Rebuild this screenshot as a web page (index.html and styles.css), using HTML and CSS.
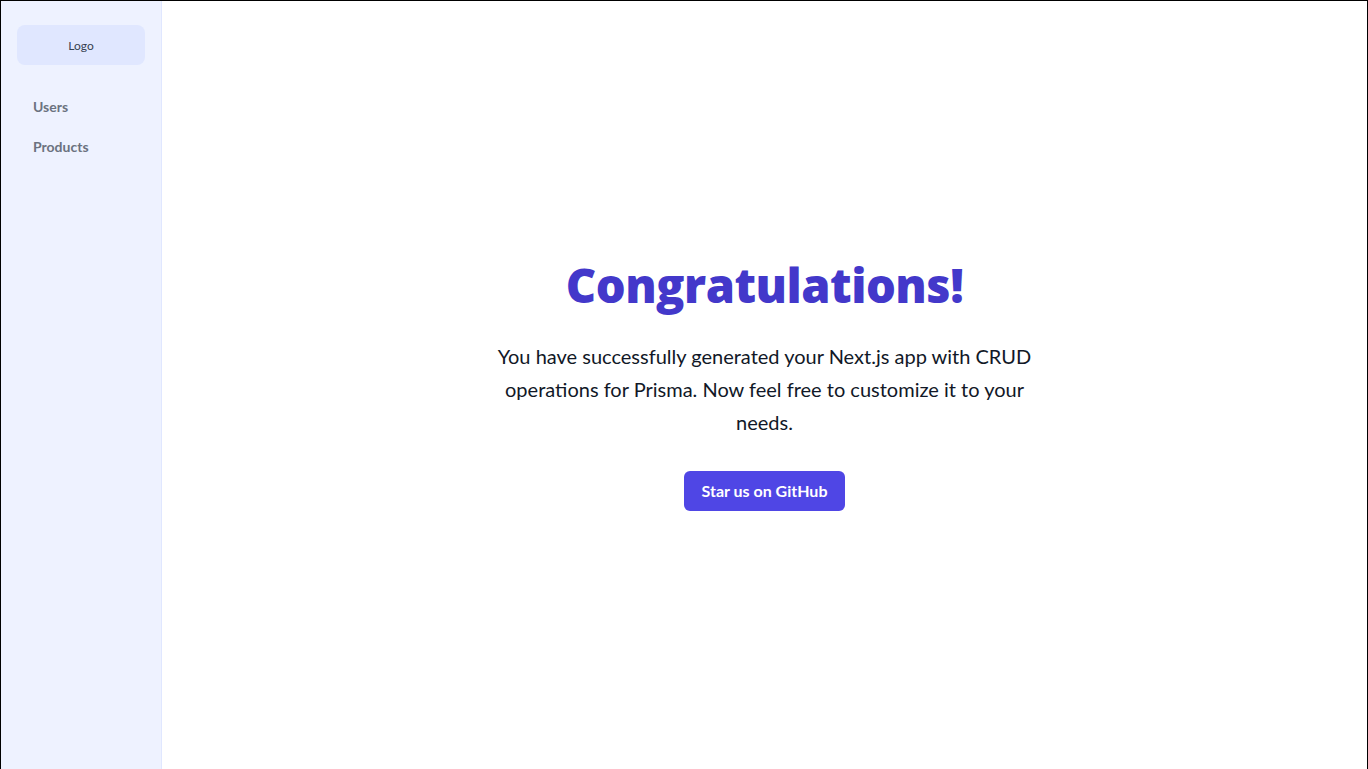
FILE: index.html
```html
<!DOCTYPE html>
<html lang="en">
<head>
<meta charset="utf-8">
<title>App</title>
<link rel="stylesheet" href="styles.css">
</head>
<body>
<div class="frame">
  <aside class="sidebar">
    <div class="logo">Logo</div>
    <nav class="nav">
      <a class="nav-item" href="#">Users</a>
      <a class="nav-item" href="#">Products</a>
    </nav>
  </aside>
  <main class="main">
    <div class="hero">
      <h1 class="title">Congratulations!</h1>
      <p class="lead">You have successfully generated your Next.js app with CRUD operations for Prisma. Now feel free to customize it to your needs.</p>
      <a class="btn" href="#">Star us on GitHub</a>
    </div>
  </main>
</div>
</body>
</html>
```

FILE: styles.css
```css
* { box-sizing: border-box; }
html, body { margin: 0; padding: 0; height: 100%; }
body {
  font-family: "Lato", "Noto Sans", sans-serif;
  background: #fff;
}
.frame {
  display: flex;
  height: 769px;
  border: 1px solid #000;
  border-bottom: none;
}
.sidebar {
  width: 161px;
  flex-shrink: 0;
  background: #eef2ff;
  border-right: 1px solid #e0e7ff;
  padding: 24px 16px;
}
.logo {
  height: 40px;
  background: #e0e7ff;
  border-radius: 8px;
  display: flex;
  align-items: center;
  justify-content: center;
  font-size: 12px;
  color: #374151;
}
.nav {
  display: flex;
  flex-direction: column;
  gap: 20px;
  margin-top: 32px;
  padding-left: 16px;
}
.nav-item {
  font-size: 14px;
  font-weight: 700;
  color: #6b7280;
  text-decoration: none;
  line-height: 20px;
}
.main {
  flex: 1;
  display: flex;
  align-items: center;
  justify-content: center;
}
.hero {
  display: flex;
  flex-direction: column;
  align-items: center;
  text-align: center;
  max-width: 560px;
  padding-top: 2px;
}
.title {
  margin: 0;
  font-family: "Open Sans", "Lato", sans-serif;
  font-size: 47px;
  font-weight: 800;
  letter-spacing: -0.5px;
  color: #4338ca;
  line-height: 1;
}
.lead {
  margin: 31px 0 0;
  font-size: 20px;
  line-height: 33px;
  color: #111827;
}
.btn {
  margin-top: 32px;
  background: #4f46e5;
  color: #fff;
  font-size: 16px;
  font-weight: 700;
  text-decoration: none;
  padding: 0 18px;
  height: 40px;
  display: inline-flex;
  align-items: center;
  border-radius: 6px;
}
```
